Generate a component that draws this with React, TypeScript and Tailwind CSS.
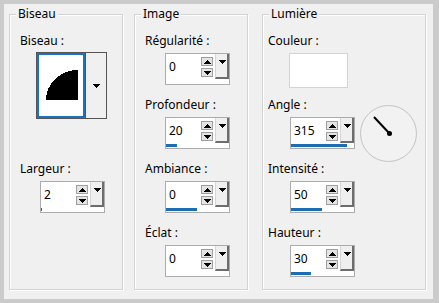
import React from "react";

function Up() {
  return (
    <svg width="7" height="4" shapeRendering="crispEdges">
      <polygon points="0,4 7,4 3.5,0" fill="#000" />
    </svg>
  );
}
function Down() {
  return (
    <svg width="7" height="4" shapeRendering="crispEdges">
      <polygon points="0,0 7,0 3.5,4" fill="#000" />
    </svg>
  );
}

function Spin({ value, bar = 0 }: { value: string; bar?: number }) {
  return (
    <div className="flex h-[32px] w-[65px] flex-col border border-[#acacac] bg-white">
      <div className="flex h-[25px] items-center">
        <span className="ml-[3px] flex-1 text-[12px] leading-[16px] text-black">{value}</span>
        <div className="mr-[2px] flex flex-col gap-[2px] pt-[1px]">
          <div className="flex h-[9px] w-[12px] items-center justify-center border border-[#9f9f9f] bg-[#e4e4e4]">
            <Up />
          </div>
          <div className="flex h-[9px] w-[12px] items-center justify-center border border-[#9f9f9f] bg-[#e4e4e4]">
            <Down />
          </div>
        </div>
        <div className="flex h-full w-[14px] justify-center border-b-2 border-l border-r-2 border-[#6d6d6d] border-l-[#d6d6d6] bg-[#efefef] pt-[6px]">
          <svg width="8" height="4" shapeRendering="crispEdges">
            <polygon points="0,0 8,0 4,4" fill="#000" />
          </svg>
        </div>
      </div>
      <div className="mt-[1px] h-[3px] bg-[#1b6db4]" style={{ width: bar }} />
    </div>
  );
}

function Group({
  title,
  className,
  children,
}: {
  title: string;
  className: string;
  children: React.ReactNode;
}) {
  return (
    <fieldset
      className={`h-[284px] border border-[#d3d3d3] shadow-[1px_1px_0_#fff,inset_1px_1px_0_#fff] ${className}`}
    >
      <legend className="ml-[6px] bg-[#f0f0f0] px-[2px] leading-[16px]">{title}</legend>
      {children}
    </fieldset>
  );
}

function Label({ children, className = "" }: { children: React.ReactNode; className?: string }) {
  return <div className={`h-[16px] leading-[16px] ${className}`}>{children}</div>;
}

export default function App() {
  return (
    <div className="h-[303px] w-[439px] bg-[#cbcbcb] pl-[4px] pt-[4px] font-['Noto_Sans',sans-serif] text-[12px] leading-[16px] text-black">
      <div className="flex h-[295px] w-[429px] items-start bg-[#f0f0f0] pl-[5px] pt-[2px]">
        <Group title="Biseau" className="w-[114px]">
          <div className="flex flex-col pl-[10px] pt-[11px]">
            <Label>Biseau :</Label>
            <div className="ml-[16px] mt-[3px] flex h-[67px] w-[71px] border border-[#555555]">
              <div className="flex w-[48px] border-2 border-[#1c72c0] bg-white">
                <svg width="44" height="63" shapeRendering="crispEdges">
                  <path d="M7 45 A32 30 0 0 1 39 15 L39 45 Z" fill="#000" />
                </svg>
              </div>
              <div className="flex flex-1 items-center justify-center border-l border-[#555555] bg-[#f0f0f0]">
                <svg width="7" height="4" shapeRendering="crispEdges">
                  <polygon points="0,0 7,0 3.5,4" fill="#000" />
                </svg>
              </div>
            </div>
            <Label className="mt-[42px]">Largeur :</Label>
            <div className="ml-[20px] mt-[4px]">
              <Spin value="2" bar={1} />
            </div>
          </div>
        </Group>

        <Group title="Image" className="ml-[11px] w-[114px]">
          <div className="flex flex-col pl-[10px] pt-[11px]">
            <Label>Régularité :</Label>
            <div className="ml-[20px] mt-[4px]">
              <Spin value="0" />
            </div>
            <Label className="mt-[12px]">Profondeur :</Label>
            <div className="ml-[20px] mt-[4px]">
              <Spin value="20" bar={11} />
            </div>
            <Label className="mt-[12px]">Ambiance :</Label>
            <div className="ml-[20px] mt-[4px]">
              <Spin value="0" bar={31} />
            </div>
            <Label className="mt-[12px]">Éclat :</Label>
            <div className="ml-[20px] mt-[4px]">
              <Spin value="0" />
            </div>
          </div>
        </Group>

        <Group title="Lumière" className="ml-[14px] w-[164px]">
          <div className="flex flex-col pl-[5px] pt-[11px]">
            <Label>Couleur :</Label>
            <div className="ml-[21px] mt-[4px] h-[35px] w-[59px] border border-[#d4d4d4] bg-white" />
            <Label className="mt-[9px]">Angle :</Label>
            <div className="ml-[22px] mt-[4px] flex h-[32px] items-center">
              <Spin value="315" bar={56} />
              <div className="-my-[12px] ml-[5px] h-[57px] w-[57px] shrink-0 rounded-full border border-[#c4c4c4] bg-[#f2f2f2]">
                <svg width="55" height="55">
                  <line x1="13" y1="11" x2="28" y2="27" stroke="#000" strokeWidth="2" />
                  <circle cx="28.5" cy="27.5" r="2.5" fill="#000" />
                </svg>
              </div>
            </div>
            <Label className="mt-[12px]">Intensité :</Label>
            <div className="ml-[22px] mt-[4px]">
              <Spin value="50" bar={31} />
            </div>
            <Label className="mt-[12px]">Hauteur :</Label>
            <div className="ml-[22px] mt-[4px]">
              <Spin value="30" bar={20} />
            </div>
          </div>
        </Group>
      </div>
    </div>
  );
}
